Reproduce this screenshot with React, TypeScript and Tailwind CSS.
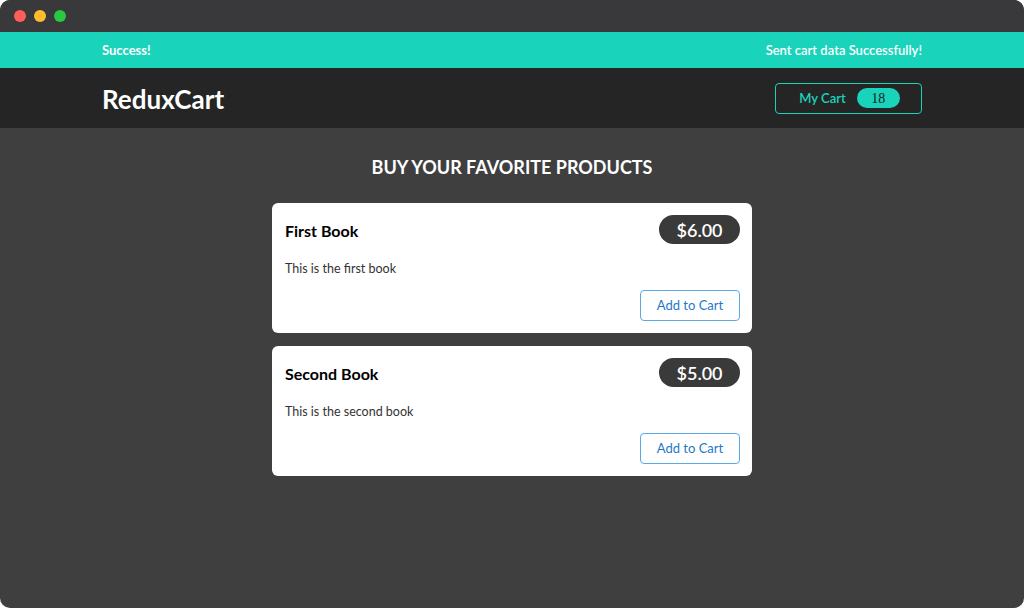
import React from 'react';

interface Product {
  title: string;
  price: number;
  description: string;
}

const products: Product[] = [
  { title: 'First Book', price: 6, description: 'This is the first book' },
  { title: 'Second Book', price: 5, description: 'This is the second book' },
];

const ProductItem: React.FC<{ item: Product }> = ({ item }) => (
  <li className="bg-white rounded-md pl-[13px] pr-[12px] pt-[12px] pb-[12px] h-[130px] flex flex-col">
    <header className="flex justify-between items-center">
      <h3 className="text-[16px] font-bold text-black pt-[3px]">{item.title}</h3>
      <div className="bg-[#3a3a3a] text-white rounded-full w-[81px] h-[29px] flex items-center justify-center text-[18px] font-semibold pt-[2px]">
        ${item.price.toFixed(2)}
      </div>
    </header>
    <p className="text-[12.5px] text-[#333] mt-[16px]">{item.description}</p>
    <div className="flex justify-end mt-auto">
      <button className="w-[100px] h-[31px] border border-[#5aa9e6] rounded text-[13px] text-[#1e78c8] pt-[1px]">
        Add to Cart
      </button>
    </div>
  </li>
);

export default function App() {
  return (
    <div className="w-[1024px] h-[608px] bg-white" style={{ fontFamily: 'Lato, "Noto Sans", sans-serif' }}>
      <div className="w-full h-full rounded-[10px] overflow-hidden bg-[#3f3f3f] flex flex-col">
        {/* title bar */}
        <div className="h-[32px] bg-[#39393b] flex items-center gap-[8px] pl-[14px]">
          <span className="w-[12px] h-[12px] rounded-full bg-[#fe5f57]" />
          <span className="w-[12px] h-[12px] rounded-full bg-[#febc2e]" />
          <span className="w-[12px] h-[12px] rounded-full bg-[#28c840]" />
        </div>

        {/* notification */}
        <div className="h-[36px] bg-[#1ad3bb] text-white text-[13px]">
          <div className="w-[820px] mx-auto h-full flex items-center justify-between pt-[2px]">
            <span className="font-bold">Success!</span>
            <span className="font-semibold">Sent cart data Successfully!</span>
          </div>
        </div>

        {/* header */}
        <header className="h-[60px] bg-[#252525]">
          <div className="w-[820px] mx-auto h-full flex items-center justify-between">
            <h1 className="text-white text-[26px] font-bold pt-[3px]">ReduxCart</h1>
            <button className="w-[147px] h-[31px] border border-[#1ad3bb] rounded flex items-center justify-center gap-[11px] pl-[2px] text-[#1ad3bb] text-[13px] font-semibold">
              <span className="pt-[2px]">My Cart</span>
              <span
                className="bg-[#1ad3bb] text-[#1a1a1a] rounded-full w-[43px] h-[20px] flex items-center justify-center text-[14px] font-normal pt-[1px]"
                style={{ fontFamily: '"Liberation Serif", serif' }}
              >
                18
              </span>
            </button>
          </div>
        </header>

        {/* products */}
        <main className="flex-1">
          <section className="w-[480px] mx-auto">
            <h2 className="text-white text-[18px] leading-[27px] font-bold text-center mt-[26px] mb-[22px]">
              BUY YOUR FAVORITE PRODUCTS
            </h2>
            <ul className="flex flex-col gap-[13px]">
              {products.map((p) => (
                <ProductItem key={p.title} item={p} />
              ))}
            </ul>
          </section>
        </main>
      </div>
    </div>
  );
}
